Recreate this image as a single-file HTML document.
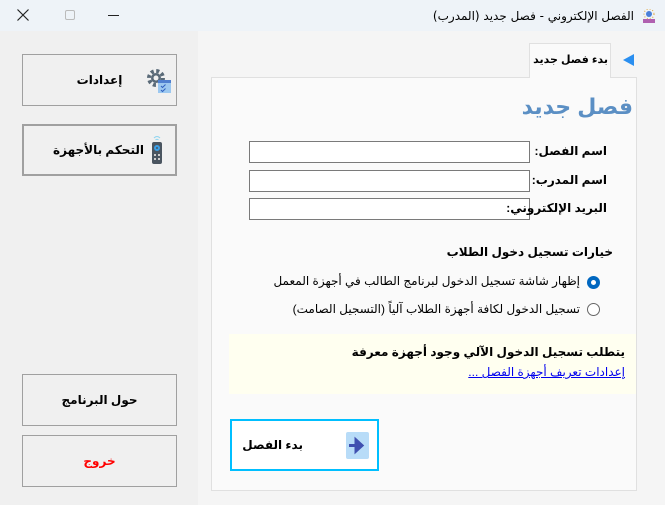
<!DOCTYPE html>
<html><head><meta charset="utf-8"><style>
*{margin:0;padding:0;box-sizing:border-box}
body{width:665px;height:505px;overflow:hidden;background:#f5f5f5;font-family:"Liberation Sans","DejaVu Sans",sans-serif;position:relative;font-size:12px;color:#000}
.abs{position:absolute}
.tb{left:0;top:0;width:665px;height:31px;background:#eef3f8}
.left{left:0;top:31px;width:198px;height:474px;background:#f0f0f0}
.btn{position:absolute;border:1px solid #a0a0a0;background:#f0f0f0;font-weight:bold;font-size:12px;display:flex;align-items:center;justify-content:center}
.in{position:absolute;left:249px;width:281px;height:22px;border:1px solid #7a7a7a;background:#fff}
.lbl{position:absolute;right:58px;font-weight:bold;font-size:12px;direction:rtl}
.rtl{direction:rtl}
</style></head><body>
<div class="abs tb"></div>
<svg class="abs" style="left:17px;top:9px" width="12" height="12"><path d="M0.5 0.5L11.5 11.5M11.5 0.5L0.5 11.5" stroke="#222" stroke-width="1.2"/></svg>
<div class="abs" style="left:65px;top:10px;width:10px;height:10px;border:1px solid #bbb;border-radius:2px"></div>
<div class="abs" style="left:108px;top:15px;width:11px;height:1px;background:#222"></div>
<div class="abs rtl" style="right:31px;top:9px;font-size:12px;font-family:'DejaVu Sans',sans-serif">الفصل الإلكتروني - فصل جديد (المدرب)</div>
<div class="abs" style="left:642px;top:9px;width:14px;height:14px">
<svg width="14" height="14"><circle cx="7" cy="5" r="3" fill="#4a7fd8"/><circle cx="7" cy="5" r="5" fill="none" stroke="#e0a030" stroke-width="1" stroke-dasharray="1 2"/><rect x="1" y="10" width="12" height="4" fill="#b060b0"/></svg></div>
<div class="abs left"></div>

<div class="btn" style="left:22px;top:54px;width:155px;height:52px"><span style="margin-left:0px">إعدادات</span></div>
<svg class="abs" style="left:145px;top:67px" width="27" height="27"><circle cx="11" cy="11" r="7" fill="none" stroke="#5a6a78" stroke-width="4" stroke-dasharray="3 2.5"/><circle cx="11" cy="11" r="5" fill="#5a6a78"/><circle cx="11" cy="11" r="2.5" fill="#f0f0f0"/><rect x="13" y="13" width="13" height="13" fill="#9cc8f0"/><rect x="13" y="13" width="13" height="3" fill="#4f7fd0"/><path d="M16 19l1.5 1.5 3-3M16 23l1.5 1.5 3-3" stroke="#3060c0" fill="none"/></svg>

<div class="btn" style="left:22px;top:124px;width:155px;height:52px;border:2px solid #a0a0a0"><span style="margin-left:-2px">التحكم بالأجهزة</span></div>
<svg class="abs" style="left:150px;top:135px" width="14" height="30"><path d="M4 3q3-3 6 0M5.5 5q1.5-1.5 3 0" stroke="#8cd4f0" fill="none"/><rect x="2" y="7" width="10" height="22" rx="2" fill="#4a5560"/><circle cx="7" cy="13" r="3" fill="#3aa0e8"/><circle cx="7" cy="13" r="1" fill="#4a5560"/><rect x="4" y="19" width="2" height="2" fill="#ccc"/><rect x="8" y="19" width="2" height="2" fill="#ccc"/><rect x="4" y="23" width="2" height="2" fill="#ccc"/><rect x="8" y="23" width="2" height="2" fill="#ccc"/></svg>

<div class="btn" style="left:22px;top:374px;width:155px;height:52px">حول البرنامج</div>
<div class="btn" style="left:22px;top:435px;width:155px;height:52px;color:#f00">خروج</div>

<div class="abs" style="left:529px;top:43px;width:82px;height:56px;background:#fafafa;border:1px solid #e0e0e0;border-bottom:none"></div>
<div class="abs" style="left:211px;top:77px;width:426px;height:414px;background:#fafafa;border:1px solid #e0e0e0"></div>
<div class="abs" style="left:530px;top:76px;width:80px;height:3px;background:#fafafa"></div>
<div class="abs rtl" style="right:57px;top:53px;font-weight:bold;font-size:11px">بدء فصل جديد</div>
<div class="abs" style="left:623px;top:54px;width:0;height:0;border-top:6px solid transparent;border-bottom:6px solid transparent;border-right:11px solid #2a8ff0"></div>

<div class="abs rtl" style="right:32px;top:94px;font-weight:bold;font-size:22px;color:#5b8fc4">فصل جديد</div>

<div class="in" style="top:141px"></div><div class="lbl" style="top:144px">اسم الفصل:</div>
<div class="in" style="top:170px"></div><div class="lbl" style="top:173px">اسم المدرب:</div>
<div class="in" style="top:198px"></div><div class="lbl" style="top:201px">البريد الإلكتروني:</div>

<div class="abs rtl" style="right:52px;top:245px;font-weight:bold;font-size:12px">خيارات تسجيل دخول الطلاب</div>
<div class="abs" style="left:587px;top:276px;width:13px;height:13px;border-radius:50%;background:#0067c0"></div>
<div class="abs" style="left:591px;top:280px;width:5px;height:5px;border-radius:50%;background:#fff"></div>
<div class="abs rtl" style="right:85px;top:274px;font-size:12px">إظهار شاشة تسجيل الدخول لبرنامج الطالب في أجهزة المعمل</div>
<div class="abs" style="left:587px;top:303px;width:13px;height:13px;border-radius:50%;border:1px solid #666;background:#fff"></div>
<div class="abs rtl" style="right:85px;top:302px;font-size:12px">تسجيل الدخول لكافة أجهزة الطلاب آلياً (التسجيل الصامت)</div>

<div class="abs" style="left:229px;top:334px;width:407px;height:60px;background:#fffff0"></div>
<div class="abs rtl" style="right:40px;top:345px;font-weight:bold;font-size:12px">يتطلب تسجيل الدخول الآلي وجود أجهزة معرفة</div>
<div class="abs rtl" style="right:40px;top:365px;font-size:12px;color:#00e;text-decoration:underline">إعدادات تعريف أجهزة الفصل ...</div>

<div class="abs" style="left:230px;top:419px;width:149px;height:52px;border:2px solid #00bfff;background:#fff"></div>
<div class="abs rtl" style="right:362px;top:438px;font-weight:bold;font-size:12px">بدء الفصل</div>
<svg class="abs" style="left:346px;top:432px" width="23" height="27"><rect x="0" y="0" width="23" height="27" rx="2" fill="#b8dcf8"/><path d="M3 13.5h12M10 8l6 5.5-6 5.5z" stroke="#4050b0" stroke-width="3" fill="#4050b0"/></svg>
</body></html>
